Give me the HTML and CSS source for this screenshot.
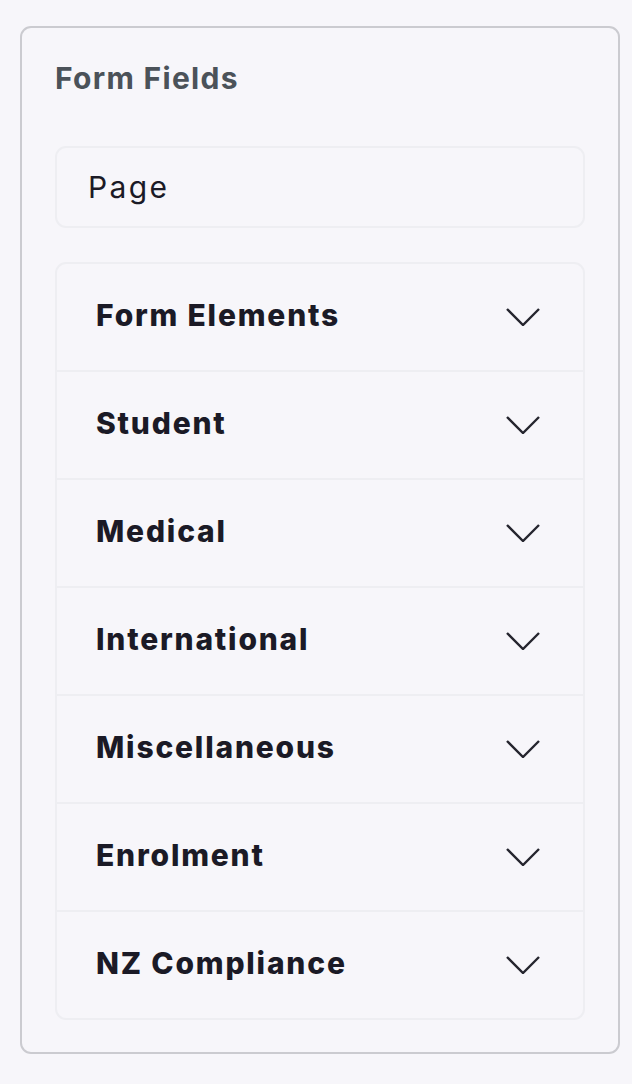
FILE: index.html
```html
<!DOCTYPE html>
<html>
<head>
<meta charset="utf-8">
<link rel="stylesheet" href="styles.css">
</head>
<body>
<div class="card">
  <h2 class="title">Form Fields</h2>
  <div class="page-box">Page</div>
  <div class="accordion">
    <div class="row"><span class="label">Form Elements</span><svg class="chev" viewBox="0 0 34 18"><path d="M1 1 L17 17 L33 1"/></svg></div>
    <div class="row"><span class="label">Student</span><svg class="chev" viewBox="0 0 34 18"><path d="M1 1 L17 17 L33 1"/></svg></div>
    <div class="row"><span class="label">Medical</span><svg class="chev" viewBox="0 0 34 18"><path d="M1 1 L17 17 L33 1"/></svg></div>
    <div class="row"><span class="label">International</span><svg class="chev" viewBox="0 0 34 18"><path d="M1 1 L17 17 L33 1"/></svg></div>
    <div class="row"><span class="label">Miscellaneous</span><svg class="chev" viewBox="0 0 34 18"><path d="M1 1 L17 17 L33 1"/></svg></div>
    <div class="row"><span class="label">Enrolment</span><svg class="chev" viewBox="0 0 34 18"><path d="M1 1 L17 17 L33 1"/></svg></div>
    <div class="row"><span class="label">NZ Compliance</span><svg class="chev" viewBox="0 0 34 18"><path d="M1 1 L17 17 L33 1"/></svg></div>
  </div>
</div>
</body>
</html>
```
FILE: styles.css
```css
* { box-sizing: border-box; }
html, body { margin: 0; background: #f7f6fa; }
body {
  padding: 26px 12px 30px 20px;
  font-family: Inter, "Noto Sans", sans-serif;
}
.card {
  width: 600px;
  border: 2px solid #cbcbd0;
  border-radius: 11px;
  padding: 32px 33px 32px 33px;
  background: #f7f6fa;
}
.title {
  margin: 0 0 50px 0;
  font-size: 30px;
  line-height: 36px;
  font-weight: 700;
  letter-spacing: 1.3px;
  color: #4b5259;
}
.page-box {
  height: 82px;
  border: 2px solid #eeeef2;
  border-radius: 11px;
  padding: 0 31px;
  display: flex;
  align-items: center;
  font-size: 30px;
  font-weight: 400;
  letter-spacing: 2.4px;
  color: #1b1a26;
}
.accordion {
  margin-top: 34px;
  border: 2px solid #eeeef2;
  border-radius: 11px;
}
.row {
  height: 106px;
  display: flex;
  align-items: center;
  justify-content: space-between;
  padding: 0 43px 0 39px;
}
.row + .row {
  height: 108px;
  border-top: 2px solid #eeeef2;
}
.label {
  font-size: 30px;
  font-weight: 800;
  letter-spacing: 1.8px;
  color: #1b1a26;
  margin-top: -4px;
}
.chev {
  width: 34px;
  height: 18px;
  fill: none;
  stroke: #25252e;
  stroke-width: 2.4;
}
```
